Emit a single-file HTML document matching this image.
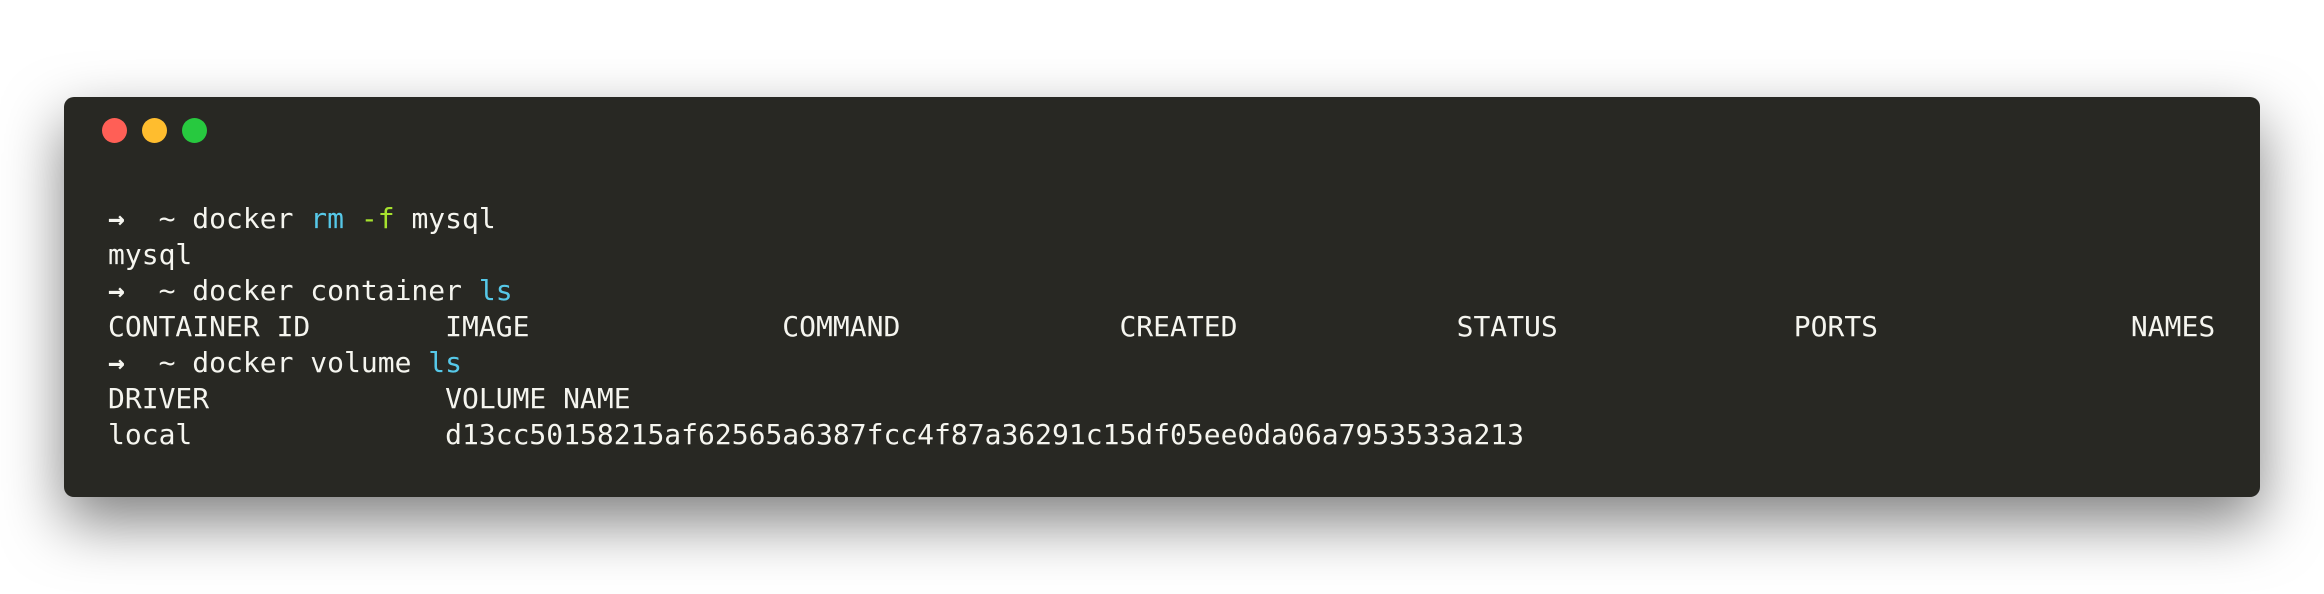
<!DOCTYPE html>
<html><head><meta charset="utf-8"><style>
html,body{margin:0;padding:0;background:#fff;width:2324px;height:594px;overflow:hidden}
.win{position:absolute;left:64px;top:97px;width:2196px;height:400px;background:#282823;border-radius:10px;box-shadow:0 25px 60px rgba(0,0,0,0.5)}
.dot{position:absolute;top:118px;width:25px;height:25px;border-radius:50%}
pre{position:absolute;left:108px;top:201px;margin:0;font-family:"DejaVu Sans Mono","Liberation Mono",monospace;font-size:28px;line-height:36px;color:#f5f5ef;white-space:pre}
.c{color:#56c8e8}.g{color:#a6e22e}.a{font-weight:bold}
</style></head><body>
<div class="win"></div>
<div class="dot" style="left:102px;background:#ff5f56"></div>
<div class="dot" style="left:142px;background:#ffbd2e"></div>
<div class="dot" style="left:182px;background:#27c93f"></div>
<pre><span class="a">→</span>  ~ docker <span class="c">rm</span> <span class="g">-f</span> mysql
mysql
<span class="a">→</span>  ~ docker container <span class="c">ls</span>
CONTAINER ID        IMAGE               COMMAND             CREATED             STATUS              PORTS               NAMES
<span class="a">→</span>  ~ docker volume <span class="c">ls</span>
DRIVER              VOLUME NAME
local               d13cc50158215af62565a6387fcc4f87a36291c15df05ee0da06a7953533a213</pre>
</body></html>
